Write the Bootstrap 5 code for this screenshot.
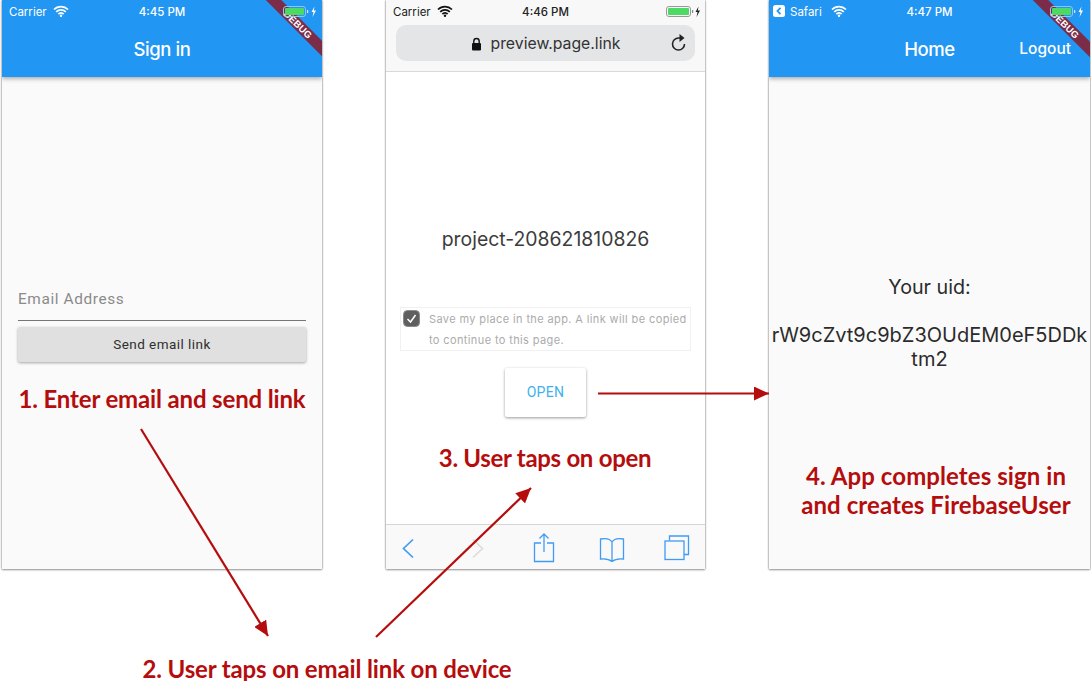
<!DOCTYPE html>
<html lang="en">
<head>
<meta charset="utf-8">
<title>Email link sign-in flow</title>
<link href="https://cdn.jsdelivr.net/npm/bootstrap@5.3.0/dist/css/bootstrap.min.css" rel="stylesheet">
<style>
html,body{margin:0;height:681px;overflow:hidden;background:#fff;}
.flow-canvas{position:relative;width:1091px;height:681px;font-family:Roboto,sans-serif;}
.phones{gap:64px;padding-left:2px;}
.phone{position:relative;width:320px;height:569px;overflow:hidden;background:#fafafa;box-shadow:0 0 2px rgba(0,0,0,.45),0 1px 2px rgba(0,0,0,.3);}
.phone-mid{width:319px;background:#fff;}
.phone-last{width:321px;}
.appbar{height:77px;background:#2196f3;color:#fff;box-shadow:0 2px 4px rgba(0,0,0,.3);flex:none;}
.statusbar{height:22px;font-family:Inter,sans-serif;font-size:11.5px;padding:0 7px;position:relative;}
.phone-last .statusbar{padding-left:4px;}
.status-time{position:absolute;left:0;right:0;top:5px;text-align:center;font-weight:500;line-height:14px;}
.status-left{gap:6px;line-height:14px;padding-top:5px;}
.phone-last .status-left{gap:5px;}
.appbar-title{font-family:Inter,sans-serif;font-size:18.5px;font-weight:500;height:55px;letter-spacing:-.4px;position:relative;}
.logout{position:absolute;right:19px;top:17px;font-size:15.5px;line-height:20px;font-weight:500;letter-spacing:0;}
.battery{position:absolute;left:279px;top:6px;}
.debug-ribbon{position:absolute;top:19px;left:250px;width:92px;height:11px;background:#7b2c49;transform:rotate(45deg);color:#fff;font:700 9.5px/11px "Liberation Sans",sans-serif;text-align:center;letter-spacing:.2px;z-index:1;}
.top-layer{position:relative;z-index:2;}
.email-form{padding:0 16px;margin-top:212px;}
.email-label{font-size:15.4px;line-height:20px;color:#8a8a8a;letter-spacing:.6px;padding-bottom:11px;border-bottom:1px solid #757575;}
.send-btn{height:35px;margin-top:6px;background:#e0e0e0;font-size:13.5px;letter-spacing:.45px;color:#2e2e2e;border-radius:2px;box-shadow:0 1px 3px rgba(0,0,0,.35);}
.caption{font-family:Lato,sans-serif;font-weight:700;font-size:24px;line-height:29px;color:#b50d0d;text-align:center;white-space:nowrap;}
.caption-1{margin-top:22px;letter-spacing:-.15px;}
.browser-top{height:72px;background:#f8f8f8;border-bottom:1px solid #d9d9d9;flex:none;color:#222;}
.url-pill{height:36px;margin:3px 10px 0;background:#e4e5e7;border-radius:10px;font-family:Inter,sans-serif;font-size:15.8px;color:#333;position:relative;gap:9px;padding-top:1px;}
.reload{position:absolute;right:7px;top:8px;}
.project-name{margin-top:155px;font-family:Inter,sans-serif;font-size:19.4px;line-height:24px;text-align:center;color:#3c3c3c;}
.save-box{margin:56px 14px 0;height:44px;border:1px solid #f1f1f1;padding:0 0 0 16px;position:relative;font-size:11px;line-height:21px;color:#ababab;letter-spacing:.38px;font-family:Inter,sans-serif;white-space:nowrap;}
.save-box .tick{position:absolute;left:2px;top:2px;}
.save-text{padding:1px 0 0 12px;font-weight:400;}
.open-btn{width:81px;height:49px;margin:17px auto 0;font-size:14px;letter-spacing:.3px;color:#40b1ef;background:#fff;box-shadow:0 1px 3px rgba(0,0,0,.4);border-radius:2px;}
.caption-3{margin-top:26px;letter-spacing:-.3px;padding-right:1px;}
.browser-bar{position:absolute;left:0;right:0;bottom:0;height:45px;background:#f9f9f9;border-top:1px solid #d6d6d6;}
.uid-area{font-size:19.7px;line-height:24px;color:#2b2b2b;text-align:center;font-family:Inter,sans-serif;font-weight:400;padding-top:198px;}
.uid-value{margin-top:24px;font-size:20px;margin-left:-3px;margin-right:-3px;}
.caption-4{margin-top:90px;letter-spacing:.08px;padding-left:13px;}
.caption-2{position:absolute;left:0;width:654px;top:654px;letter-spacing:-.14px;}
.arrows{position:absolute;left:0;top:0;z-index:3;pointer-events:none;}
</style>
</head>
<body>
<div class="flow-canvas">
  <div class="phones d-flex">
    <!-- Phone 1 -->
    <section class="phone d-flex flex-column">
      <div class="debug-ribbon"><span>DEBUG</span></div>
      <header class="appbar">
        <div class="statusbar d-flex top-layer">
          <div class="status-left d-flex align-items-start">
            <span>Carrier</span>
            <svg width="16" height="12" viewBox="0 0 16 12"><path d="M1 4.500a10 10 0 0 1 14 0M3.200 6.900a6.800 6.800 0 0 1 9.600 0M5.400 9.100a3.400 3.400 0 0 1 5.200 0" fill="none" stroke="#fff" stroke-width="1.700"/><circle cx="8" cy="10.800" r="1.200" fill="#fff"/></svg>
          </div>
          <div class="status-time">4:45 PM</div>
          <svg class="battery" width="36" height="12" viewBox="0 0 36 12"><rect x="2.500" y=".5" width="22" height="10" rx="2.500" fill="none" stroke="#8fc8f5"/><rect x="4" y="2" width="19" height="7" rx="1" fill="#4cd964"/><rect x="26" y="4" width="1.200" height="3" fill="#cfe6fa"/><path d="M33.500 .5l-3 5.500h2l-1 5 3.500-6.500h-2.200z" fill="#fff"/></svg>
        </div>
        <div class="appbar-title d-flex align-items-center justify-content-center">Sign in</div>
      </header>
      <div class="email-form">
        <div class="email-label">Email Address</div>
        <div class="send-btn d-flex align-items-center justify-content-center">Send email link</div>
        <div class="caption caption-1">1. Enter email and send link</div>
      </div>
    </section>
    <!-- Phone 2 -->
    <section class="phone phone-mid d-flex flex-column">
      <header class="browser-top">
        <div class="statusbar d-flex">
          <div class="status-left d-flex align-items-start">
            <span>Carrier</span>
            <svg width="16" height="12" viewBox="0 0 16 12"><path d="M1 4.500a10 10 0 0 1 14 0M3.200 6.900a6.800 6.800 0 0 1 9.600 0M5.400 9.100a3.400 3.400 0 0 1 5.200 0" fill="none" stroke="#111" stroke-width="1.700"/><circle cx="8" cy="10.800" r="1.200" fill="#111"/></svg>
          </div>
          <div class="status-time">4:46 PM</div>
          <svg class="battery" width="36" height="12" viewBox="0 0 36 12"><rect x="1.500" y=".5" width="24" height="10" rx="2.500" fill="none" stroke="#999"/><rect x="3" y="2" width="21" height="7" rx="1" fill="#4cd964"/><rect x="27" y="4" width="1.200" height="3" fill="#888"/><path d="M33.500 .5l-3 5.500h2l-1 5 3.500-6.500h-2.200z" fill="#222"/></svg>
        </div>
        <div class="url-pill d-flex align-items-center justify-content-center">
          <svg width="11" height="14" viewBox="0 0 11 14"><path d="M2.800 6V4.200a2.700 2.700 0 0 1 5.400 0V6" fill="none" stroke="#111" stroke-width="1.400"/><rect x="1" y="6" width="9" height="7.500" rx="1" fill="#111"/></svg>
          <span>preview.page.link</span>
          <svg class="reload" width="18" height="20" viewBox="0 0 18 20"><path d="M14.500 11a6 6 0 1 1-6-6h2" fill="none" stroke="#222" stroke-width="1.600"/><path d="M9.500 1l5 4-5 4z" fill="#222"/></svg>
        </div>
      </header>
      <div class="project-name">project-208621810826</div>
      <div class="save-box">
        <svg class="tick" width="18" height="18" viewBox="0 0 18 18"><rect x=".5" y=".5" width="16" height="16" rx="4" fill="#5f5f5f" stroke="#8a8a8a"/><path d="M4.500 9l3 3 5-7" fill="none" stroke="#fff" stroke-width="1.500"/></svg>
        <div class="save-text">Save my place in the app. A link will be copied<br>to continue to this page.</div>
      </div>
      <div class="open-btn d-flex align-items-center justify-content-center">OPEN</div>
      <div class="caption caption-3">3. User taps on open</div>
      <footer class="browser-bar">
        <svg width="319" height="44" viewBox="0 0 319 44" class="d-block">
          <g fill="none" stroke="#3f9bf4" stroke-width="1.300">
            <path d="M155 18h-6.500v18.500h19V18H161M158 27V9.500M153.500 13.500l4.500-4.500 4.500 4.500"/>
            <path d="M27 14.500l-9.500 9 9.500 9" stroke-width="1.700"/>
            <path d="M226 36.500c-3-2.500-7-3-11.500-2.500V14c5-1 9.500-.5 11.500 3 2-3.500 6.500-4 11.500-3v20c-4.500-.5-8.500 0-11.500 2.500zM226 17v19"/>
            <rect x="279" y="16" width="19" height="18.500"/>
            <path d="M283.500 15.500V11h19v18.500h-4.500"/>
          </g>
          <path d="M87 14.500l9.500 9-9.500 9" fill="none" stroke="#dcdcdc" stroke-width="1.700"/>
        </svg>
      </footer>
    </section>
    <!-- Phone 3 -->
    <section class="phone phone-last d-flex flex-column">
      <div class="debug-ribbon"><span>DEBUG</span></div>
      <header class="appbar">
        <div class="statusbar d-flex top-layer">
          <div class="status-left d-flex align-items-start">
            <svg width="12" height="12" viewBox="0 0 12 12"><rect width="12" height="12" rx="2.500" fill="#fff"/><path d="M7.500 2.800L4.500 6l3 3.200" fill="none" stroke="#2196f3" stroke-width="1.800"/></svg>
            <span>Safari</span>
            <svg width="16" height="12" viewBox="0 0 16 12" class="ms-1"><path d="M1 4.500a10 10 0 0 1 14 0M3.200 6.900a6.800 6.800 0 0 1 9.600 0M5.400 9.100a3.400 3.400 0 0 1 5.200 0" fill="none" stroke="#fff" stroke-width="1.700"/><circle cx="8" cy="10.800" r="1.200" fill="#fff"/></svg>
          </div>
          <div class="status-time">4:47 PM</div>
          <svg class="battery" width="36" height="12" viewBox="0 0 36 12"><rect x="2.500" y=".5" width="22" height="10" rx="2.500" fill="none" stroke="#8fc8f5"/><rect x="4" y="2" width="19" height="7" rx="1" fill="#4cd964"/><rect x="26" y="4" width="1.200" height="3" fill="#cfe6fa"/><path d="M33.500 .5l-3 5.500h2l-1 5 3.500-6.500h-2.200z" fill="#fff"/></svg>
        </div>
        <div class="appbar-title d-flex align-items-center justify-content-center">Home<span class="logout">Logout</span></div>
      </header>
      <div class="uid-area">
        <div>Your uid:</div>
        <div class="uid-value">rW9cZvt9c9bZ3OUdEM0eF5DDk<br>tm2</div>
        <div class="caption caption-4">4. App completes sign in<br>and creates FirebaseUser</div>
      </div>
    </section>
  </div>
  <div class="caption caption-2">2. User taps on email link on device</div>
  <svg class="arrows" width="1091" height="681" viewBox="0 0 1091 681">
    <defs>
      <marker id="head" markerUnits="userSpaceOnUse" markerWidth="16" markerHeight="14" refX="15" refY="7" orient="auto"><path d="M0 0L15 7 0 14z" fill="#b50d0d"/></marker>
    </defs>
    <g stroke="#b50d0d" stroke-width="2.200" fill="none">
      <path d="M141 429L268 636" marker-end="url(#head)"/>
      <path d="M376 637L531 488" marker-end="url(#head)"/>
      <path d="M598 393.500H769" marker-end="url(#head)"/>
    </g>
  </svg>
</div>
<script src="https://cdn.jsdelivr.net/npm/bootstrap@5.3.0/dist/js/bootstrap.bundle.min.js"></script>
</body>
</html>
